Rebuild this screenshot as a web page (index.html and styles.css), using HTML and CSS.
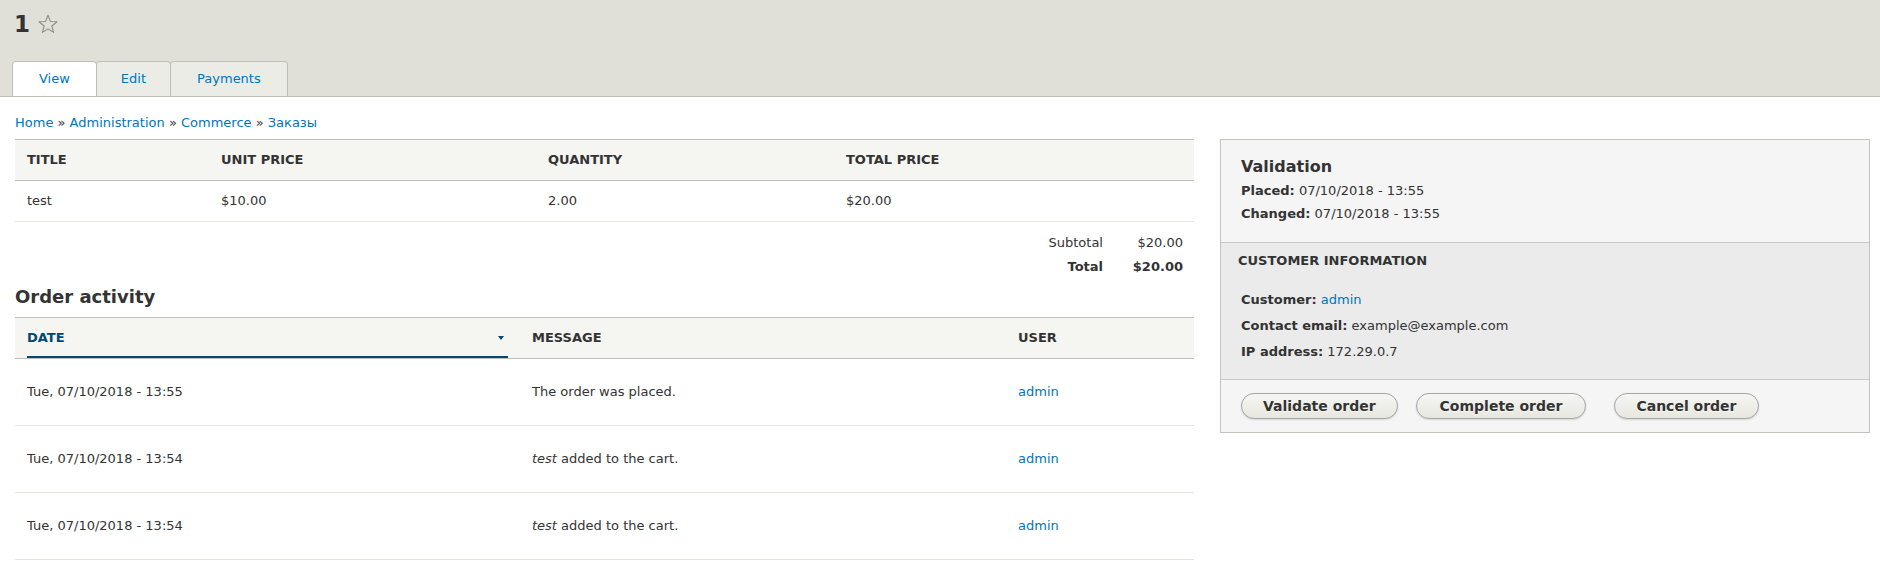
FILE: index.html
```html
<!DOCTYPE html>
<html lang="en">
<head>
<meta charset="utf-8">
<title>1</title>
<link rel="stylesheet" href="styles.css">
</head>
<body>
<header class="page-header">
  <div class="title-row">
    <h1 class="page-title">1</h1>
    <svg class="star" width="20" height="20" viewBox="0 0 19 19" aria-hidden="true"><polygon points="9.5,1.2 11.79,7.04 18.06,7.42 13.21,11.41 14.79,17.48 9.5,14.1 4.21,17.48 5.79,11.41 0.94,7.42 7.21,7.04" fill="none" stroke="#8a8a80" stroke-width="1" stroke-linejoin="round"/></svg>
  </div>
  <nav class="tabs">
    <a class="tab is-active" href="#">View</a>
    <a class="tab tab--narrow" href="#">Edit</a>
    <a class="tab" href="#">Payments</a>
  </nav>
</header>
<main class="page">
  <div class="breadcrumb"><a href="#">Home</a> » <a href="#">Administration</a> » <a href="#">Commerce</a> » <a href="#">Заказы</a></div>
  <div class="order-layout">
    <div class="order-main">
      <table class="data items">
        <colgroup><col class="c-title"><col class="c-unit"><col class="c-qty"><col></colgroup>
        <thead>
          <tr><th>Title</th><th>Unit price</th><th>Quantity</th><th>Total price</th></tr>
        </thead>
        <tbody>
          <tr><td>test</td><td>$10.00</td><td>2.00</td><td>$20.00</td></tr>
        </tbody>
      </table>
      <div class="totals">
        <div class="total-line"><span class="total-label">Subtotal</span><span class="total-value">$20.00</span></div>
        <div class="total-line total-line--total"><span class="total-label">Total</span><span class="total-value">$20.00</span></div>
      </div>
      <h2 class="section-title">Order activity</h2>
      <table class="data activity">
        <colgroup><col class="c-date"><col class="c-msg"><col></colgroup>
        <thead>
          <tr>
            <th class="is-active"><a href="#" class="sort-link">Date<span class="sort-arrow"></span></a></th>
            <th>Message</th>
            <th>User</th>
          </tr>
        </thead>
        <tbody>
          <tr><td>Tue, 07/10/2018 - 13:55</td><td>The order was placed.</td><td><a href="#">admin</a></td></tr>
          <tr><td>Tue, 07/10/2018 - 13:54</td><td><em>test</em> added to the cart.</td><td><a href="#">admin</a></td></tr>
          <tr><td>Tue, 07/10/2018 - 13:54</td><td><em>test</em> added to the cart.</td><td><a href="#">admin</a></td></tr>
        </tbody>
      </table>
    </div>
    <aside class="order-side">
      <div class="meta-header">
        <h3 class="meta-title">Validation</h3>
        <div class="meta-item"><strong>Placed:</strong> 07/10/2018 - 13:55</div>
        <div class="meta-item"><strong>Changed:</strong> 07/10/2018 - 13:55</div>
      </div>
      <div class="meta-details">
        <div class="details-summary">Customer information</div>
        <div class="details-body">
          <div class="detail-item"><strong>Customer:</strong> <a href="#">admin</a></div>
          <div class="detail-item"><strong>Contact email:</strong> example@example.com</div>
          <div class="detail-item"><strong>IP address:</strong> 172.29.0.7</div>
        </div>
      </div>
      <div class="meta-actions">
        <button class="button" type="button">Validate order</button>
        <button class="button button--complete" type="button">Complete order</button>
        <a class="button button--cancel" href="#">Cancel order</a>
      </div>
    </aside>
  </div>
</main>
</body>
</html>
```
FILE: styles.css
```css
* { box-sizing: border-box; }

body {
  margin: 0;
  font-family: "DejaVu Sans", sans-serif;
  font-size: 13px;
  line-height: 20px;
  color: #333;
  background: #fff;
}

a { color: #0074bd; text-decoration: none; }

.page-header {
  background: #e0e0d8;
  border-bottom: 1px solid #bfbfba;
  padding: 10px 12px 0;
}

.title-row {
  display: flex;
  align-items: center;
  height: 28px;
}

.page-title {
  margin: 0 0 0 2px;
  font-size: 23px;
  line-height: 28px;
  font-weight: bold;
  color: #333;
}

.star { margin-left: 8px; display: block; }

.tabs {
  display: flex;
  margin-top: 23px;
}

.tab {
  display: block;
  padding: 7px 26px;
  line-height: 20px;
  background: #ecece6;
  border: 1px solid #bfbfba;
  border-bottom: 0;
  border-radius: 4px 4px 0 0;
  margin-right: -1px;
  color: #0074bd;
}

.tab--narrow { padding: 7px 24px; }

.tab.is-active { background: #fff; position: relative; }

.page { padding: 0 10px 0 15px; }

.breadcrumb {
  padding-top: 16px;
  margin-bottom: 6px;
  line-height: 20px;
}

.order-layout {
  display: flex;
  align-items: flex-start;
}

.order-main {
  width: 1179px;
  flex: 0 0 1179px;
  margin-right: 26px;
}

.data {
  width: 100%;
  border-collapse: collapse;
  table-layout: fixed;
  border-top: 1px solid #bfbfba;
}

.data thead tr { border-bottom: 1px solid #bfbfba; }

.data th {
  background: #f5f5f2;
  text-align: left;
  text-transform: uppercase;
  font-weight: bold;
  padding: 10px 12px;
  color: #333;
}

.data td {
  padding: 10px 12px;
  text-align: left;
}

.data tbody tr { border-bottom: 1px solid #e6e4df; }

.items .c-title { width: 194px; }
.items .c-unit { width: 327px; }
.items .c-qty { width: 298px; }

.activity .c-date { width: 505px; }
.activity .c-msg { width: 486px; }

.activity th.is-active { padding-bottom: 0; }

.sort-link {
  display: block;
  position: relative;
  color: #004875;
  padding-bottom: 8px;
  border-bottom: 2px solid #004875;
}

.sort-arrow {
  position: absolute;
  right: 4px;
  top: 8px;
  width: 0;
  height: 0;
  border-left: 3px solid transparent;
  border-right: 3px solid transparent;
  border-top: 4px solid #004875;
}

.activity td { padding: 23px 12px; }

.totals {
  margin-top: 9px;
  padding-right: 11px;
  text-align: right;
}

.total-line { line-height: 24px; }

.total-value {
  display: inline-block;
  width: 80px;
  text-align: right;
}

.total-line--total { font-weight: bold; }

.section-title {
  font-size: 18px;
  line-height: 22px;
  font-weight: bold;
  margin: 7px 0 9px;
}

.order-side {
  width: 650px;
  flex: 0 0 650px;
  border: 1px solid #c4c4bf;
}

.meta-header {
  background: #f5f5f5;
  padding: 17px 20px 17px;
}

.meta-title {
  margin: 0 0 2px;
  font-size: 16px;
  line-height: 20px;
  font-weight: bold;
}

.meta-item { line-height: 23px; }

.meta-details {
  background: #ebebeb;
  border-top: 1px solid #c8c8c8;
  border-bottom: 1px solid #c8c8c8;
  padding: 8px 20px 14px 17px;
}

.details-summary {
  font-weight: bold;
  text-transform: uppercase;
  line-height: 20px;
}

.details-body {
  padding-left: 3px;
  margin-top: 16px;
}

.detail-item { line-height: 26px; }

.meta-actions {
  display: flex;
  align-items: center;
  background: #f5f5f5;
  padding: 13px 20px 13px;
}

.button {
  display: inline-block;
  font-family: "DejaVu Sans", sans-serif;
  font-size: 14px;
  font-weight: bold;
  line-height: normal;
  padding: 4px 21px;
  border: 1px solid #a6a6a6;
  border-radius: 20em;
  background-color: #f2f1eb;
  background-image: linear-gradient(to bottom, #f6f6f3, #e7e7df);
  box-shadow: 0 1px 2px rgba(0, 0, 0, 0.125);
  color: #333;
  text-shadow: 0 1px rgba(255, 255, 255, 0.6);
  margin-right: 18px;
  cursor: pointer;
}

.button--complete { padding: 4px 23px; }

.button--cancel { margin-left: 10px; margin-right: 0; }
```
